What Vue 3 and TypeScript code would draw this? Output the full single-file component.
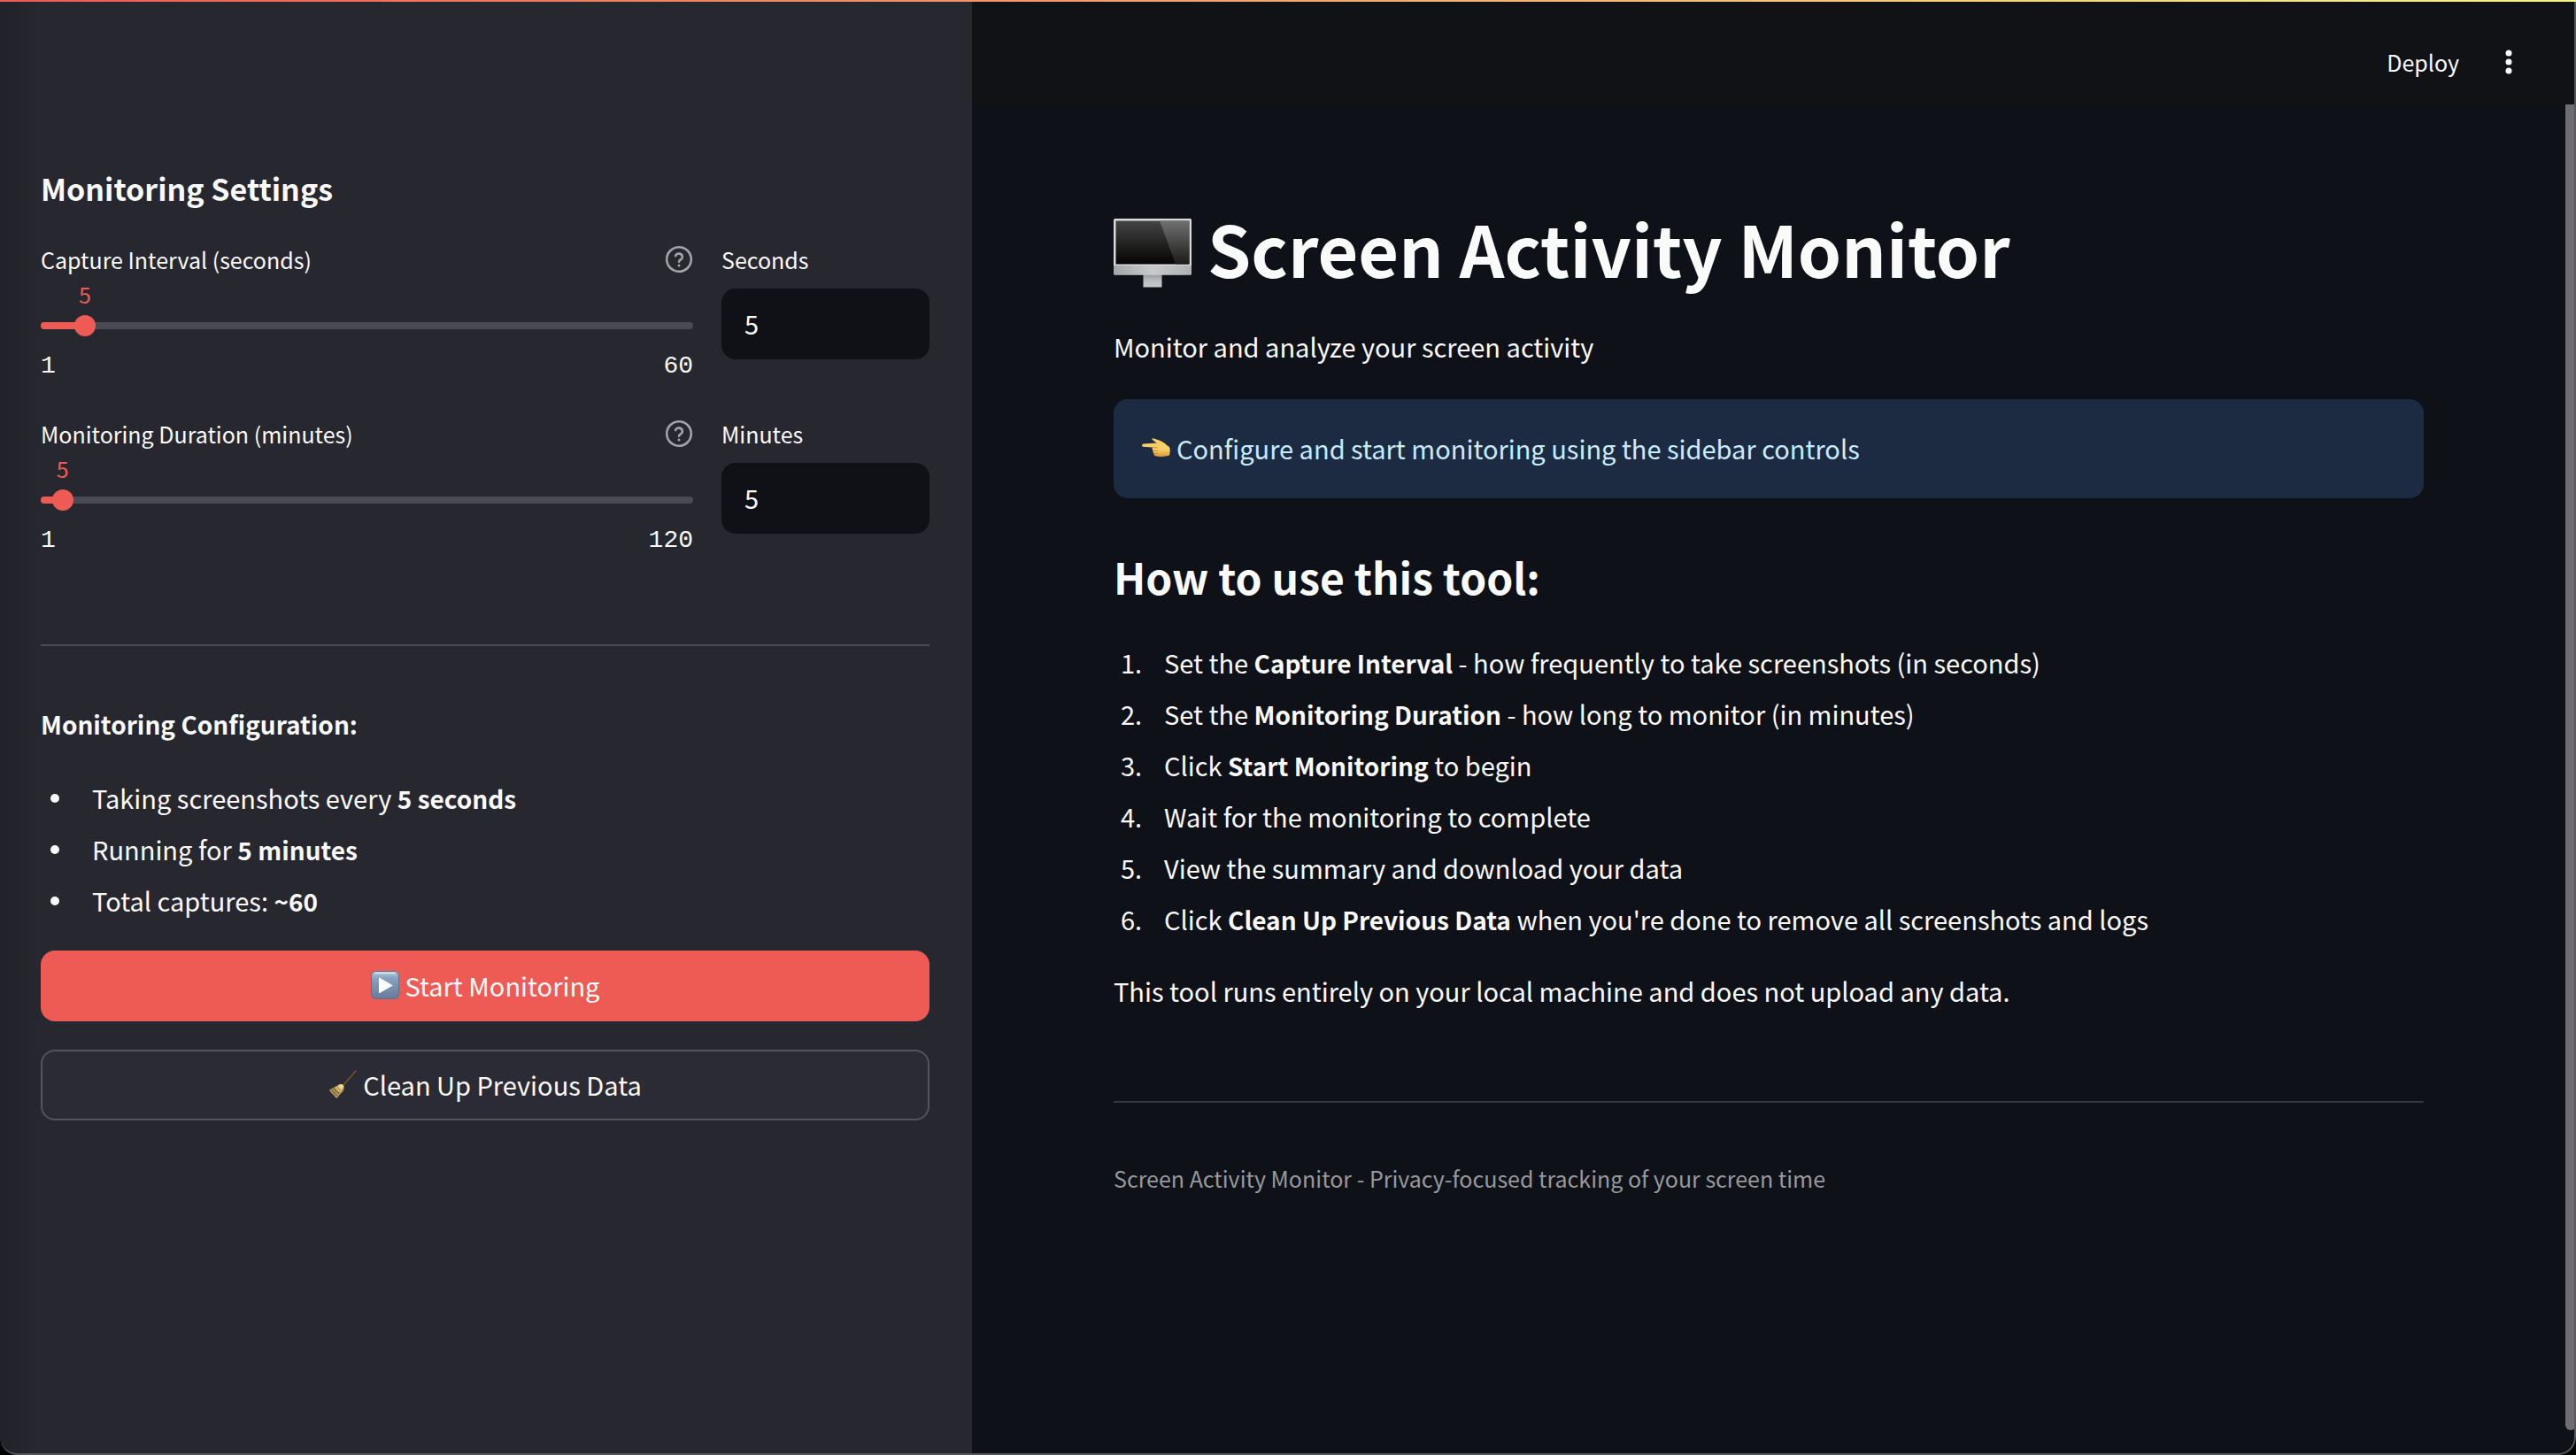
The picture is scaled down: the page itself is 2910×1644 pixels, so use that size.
<script setup lang="ts">
import { computed, reactive } from 'vue'

interface Setting {
  id: string
  label: string
  unit: string
  min: number
  max: number
  value: number
}

const settings = reactive<Setting[]>([
  { id: 'interval', label: 'Capture Interval (seconds)', unit: 'Seconds', min: 1, max: 60, value: 5 },
  { id: 'duration', label: 'Monitoring Duration (minutes)', unit: 'Minutes', min: 1, max: 120, value: 5 },
])

const percent = (s: Setting): string => `${((s.value - s.min) / (s.max - s.min)) * 100}%`
const captures = computed(() => Math.round((settings[1].value * 60) / settings[0].value))
</script>

<template>
  <div class="app">
    <aside class="sidebar">
      <h3>Monitoring Settings</h3>
      <div v-for="s in settings" :key="s.id" class="setting">
        <div class="slider">
          <div class="label-row">
            <label :for="`${s.id}-range`">{{ s.label }}</label>
            <button class="help" type="button" :aria-label="`Help: ${s.label}`">
              <svg viewBox="0 0 24 24" width="36" height="36" fill="none" stroke="currentColor" stroke-width="2" stroke-linecap="round" stroke-linejoin="round">
                <circle cx="12" cy="12" r="9.2" stroke-width="1.7" />
                <path d="M9.4 9.4a2.7 2.7 0 0 1 5.2.9c0 1.800-2.600 2.300-2.600 3.500" stroke-width="1.7" />
                <path d="M12 16.600v.1" />
              </svg>
            </button>
          </div>
          <div class="value-row">
            <div class="value-anchor" :style="{ width: percent(s) }"><output :for="`${s.id}-range`">{{ s.value }}</output></div>
          </div>
          <div class="track">
            <div class="fill" :style="{ width: percent(s) }"></div>
            <input :id="`${s.id}-range`" v-model.number="s.value" type="range" :min="s.min" :max="s.max" />
          </div>
          <div class="bounds"><span>{{ s.min }}</span><span>{{ s.max }}</span></div>
        </div>
        <div class="number">
          <label :for="`${s.id}-number`">{{ s.unit }}</label>
          <input :id="`${s.id}-number`" v-model.number="s.value" type="text" inputmode="numeric" />
        </div>
      </div>
      <hr />
      <p class="config"><strong>Monitoring Configuration:</strong></p>
      <ul>
        <li>Taking screenshots every <strong>{{ settings[0].value }} seconds</strong></li>
        <li>Running for <strong>{{ settings[1].value }} minutes</strong></li>
        <li>Total captures: <strong>~{{ captures }}</strong></li>
      </ul>
      <div class="actions">
        <button class="btn primary" type="button">
          <svg viewBox="0 0 32 32" width="32" height="32" aria-hidden="true">
            <defs>
              <linearGradient id="play" x1="0" y1="0" x2="0" y2="1">
                <stop offset="0" stop-color="#b9cbdc" />
                <stop offset=".25" stop-color="#86a3bf" />
                <stop offset="1" stop-color="#667c97" />
              </linearGradient>
            </defs>
            <rect x=".5" y=".5" width="31" height="31" rx="5" fill="url(#play)" stroke="#58728c" />
            <path d="M5 2.5h22" stroke="#dce6ef" stroke-width="1.5" stroke-linecap="round" />
            <path d="M9 8.2v16.2q0 1 1 .5l14-7.8q1-.6 0-1.2L10 7.700q-1-.5-1 .5z" fill="#fff" />
          </svg>
          Start Monitoring
        </button>
        <button class="btn secondary" type="button">
          <svg viewBox="0 0 32 32" width="32" height="32" aria-hidden="true">
            <path d="M16.500 17.500 31 1" stroke="#7c5526" stroke-width="1.4" stroke-linecap="round" />
            <path d="M12 16.500q4-1.600 5.500 2 .8 5.500-4 8.500L9.500 32q-2-1-3-3-3.500-2.500-5.500-6.500z" fill="#b59a5e" />
            <path d="M12 16.500q4-1.600 5.500 2-1 3-3 3.500-3-1-3.500-4.500z" fill="#f0d683" />
            <path d="M3.500 22q2 4 6.500 7M6 20.500q2 4 6 6" stroke="#7d6337" stroke-width="1.400" fill="none" />
            <path d="M8.500 18.700q2 4 5.500 5.500" stroke="#ddc58c" stroke-width="1.200" fill="none" />
          </svg>
          Clean Up Previous Data
        </button>
      </div>
    </aside>

    <div class="main">
      <header>
        <button class="deploy" type="button">Deploy</button>
        <button class="menu" type="button" aria-label="Main menu">
          <svg viewBox="0 0 32 32" width="32" height="32" fill="currentColor">
            <circle cx="16" cy="6" r="3.5" /><circle cx="16" cy="16" r="3.5" /><circle cx="16" cy="26" r="3.5" />
          </svg>
        </button>
      </header>
      <main>
        <h1>
          <svg viewBox="0 0 88 78" width="88" height="78" aria-hidden="true">
            <defs>
              <linearGradient id="scr" x1="0" y1="0" x2="0" y2="1">
                <stop offset="0" stop-color="#444" /><stop offset="1" stop-color="#050403" />
              </linearGradient>
              <linearGradient id="glare" x1="0" y1="0" x2="0" y2="1">
                <stop offset="0" stop-color="#707070" /><stop offset="1" stop-color="#1c1b1a" />
              </linearGradient>
              <linearGradient id="chin" x1="0" y1="0" x2="1" y2="0">
                <stop offset="0" stop-color="#a5a6a9" /><stop offset=".5" stop-color="#c8c9cc" /><stop offset="1" stop-color="#b0b1b4" />
              </linearGradient>
              <linearGradient id="stand" x1="0" y1="0" x2="0" y2="1">
                <stop offset="0" stop-color="#8d8e91" /><stop offset=".5" stop-color="#b9babd" /><stop offset="1" stop-color="#c9cacd" />
              </linearGradient>
            </defs>
            <rect x="33.500" y="61" width="21" height="16.500" fill="url(#stand)" />
            <rect x="0" y="0" width="88" height="63.500" rx="1.500" fill="#d9dadb" />
            <path d="M0 53h88v9q0 1.500-1.500 1.500h-85Q0 63.500 0 62z" fill="url(#chin)" />
            <rect x="2.500" y="2.500" width="83" height="49" fill="url(#scr)" />
            <path d="M52 2.500h33.500v49H70z" fill="url(#glare)" />
          </svg>
          Screen Activity Monitor
        </h1>
        <p class="lead">Monitor and analyze your screen activity</p>
        <div class="info" role="alert">
          <svg viewBox="0 0 32 24" width="32" height="24" aria-hidden="true">
            <defs>
              <linearGradient id="hand" x1="0" y1="0" x2="0" y2="1">
                <stop offset="0" stop-color="#f9cf62" /><stop offset=".6" stop-color="#f7d06b" /><stop offset="1" stop-color="#d99a31" />
              </linearGradient>
            </defs>
            <path d="M1.500 7.500Q0 8 0 9.200t1.500 1.500L12 11.500q-1 2 .5 3.500-.6 2 1 3.400 0 2.600 3 3.200 4 .8 8 .1 4-.2 6.500-1.200 1.500-5.500 0-9.500-3-1.500-5-4Q20 3 13.500 1.500q-2.500-.6-2 1 2.500 2.500 5.500 4z" fill="url(#hand)" />
            <path d="M12 11.500q3 .5 5.500-.2M12.500 15q3 .6 5.500-.2M13.500 18.400q2.500.5 4.500-.4" stroke="#c98a2b" stroke-width=".9" fill="none" />
          </svg>
          <span>Configure and start monitoring using the sidebar controls</span>
        </div>
        <h2>How to use this tool:</h2>
        <ol>
          <li>Set the <strong>Capture Interval</strong> - how frequently to take screenshots (in seconds)</li>
          <li>Set the <strong>Monitoring Duration</strong> - how long to monitor (in minutes)</li>
          <li>Click <strong>Start Monitoring</strong> to begin</li>
          <li>Wait for the monitoring to complete</li>
          <li>View the summary and download your data</li>
          <li>Click <strong>Clean Up Previous Data</strong> when you're done to remove all screenshots and logs</li>
        </ol>
        <p class="note">This tool runs entirely on your local machine and does not upload any data.</p>
        <hr />
        <footer>Screen Activity Monitor - Privacy-focused tracking of your screen time</footer>
      </main>
      <div class="scrollbar" aria-hidden="true"></div>
    </div>
    <div class="rainbow"></div>
    <div class="frame"></div>
  </div>
</template>

<style>
body {
  background: #000;
}
</style>

<style scoped>
* {
  box-sizing: border-box;
}
.app {
  position: relative;
  display: flex;
  min-height: 100vh;
  overflow: hidden;
  border-radius: 0 0 20px 20px;
  background: #0e1117;
  color: #fafafa;
  font: 400 29px/52px "Noto Sans CJK SC", "Noto Sans", sans-serif;
}
h1, h2, h3, p, ul, ol {
  margin: 0;
}
button, input {
  font: inherit;
  color: inherit;
}
button {
  display: flex;
  align-items: center;
  justify-content: center;
  padding: 0;
  border: 0;
  background: none;
}
strong {
  font-size: 28px;
  font-weight: 700;
}
svg {
  flex: none;
}
hr {
  width: 100%;
  height: 2px;
  margin: 0;
  border: 0;
  background: #4b4c53;
}
.sidebar {
  flex: none;
  width: 1098px;
  padding: 189px 48px 48px 46px;
  background: linear-gradient(90deg, #22222a, #27272f 48px);
}
h3 {
  margin-bottom: 30px;
  font-size: 34px;
  font-weight: 700;
  line-height: 48px;
}
.setting {
  display: flex;
  gap: 32px;
  height: 164px;
  margin-bottom: 33px;
}
.slider {
  flex: 1;
}
.number {
  width: 235px;
}
.label-row {
  display: flex;
  justify-content: space-between;
  align-items: center;
  height: 52px;
}
label {
  display: block;
  height: 52px;
  font-size: 25px;
  line-height: 52px;
}
.help {
  width: 32px;
  height: 36px;
  color: #a3a3a8;
}
.value-row {
  display: flex;
  height: 45px;
}
.value-anchor {
  display: flex;
  flex: none;
  justify-content: flex-end;
}
output {
  width: 40px;
  margin-right: -20px;
  color: #ed5b54;
  font-size: 25px;
  line-height: 26px;
  text-align: center;
}
.track {
  position: relative;
  height: 8px;
  border-radius: 4px;
  background: #4a4a54;
}
.fill {
  height: 8px;
  border-radius: 4px;
  background: #ed5b54;
}
.track input {
  position: absolute;
  top: -8px;
  left: -12px;
  width: calc(100% + 24px);
  height: 24px;
  margin: 0;
  appearance: none;
  background: none;
}
.track input::-webkit-slider-thumb {
  width: 24px;
  height: 24px;
  border-radius: 50%;
  appearance: none;
  background: #ed5b54;
}
.bounds {
  display: flex;
  justify-content: space-between;
  margin-top: 25px;
  font: 400 28px/34px "Liberation Mono", monospace;
}
.number input {
  display: block;
  width: 100%;
  height: 80px;
  margin-top: 7px;
  padding: 0 26px 2px;
  border: 0;
  border-radius: 16px;
  background: #101116;
}
.sidebar hr {
  margin: 100px 0 61px;
}
ul {
  margin-top: 28px;
  padding-left: 58px;
  line-height: 58px;
}
ul li {
  position: relative;
  height: 58px;
  list-style: none;
}
ul li::before {
  position: absolute;
  top: 25px;
  left: -47px;
  width: 10px;
  height: 10px;
  border-radius: 50%;
  background: #fafafa;
  content: "";
}
.actions {
  display: flex;
  flex-direction: column;
  gap: 32px;
  margin-top: 28px;
}
.btn {
  gap: 7px;
  width: 100%;
  height: 80px;
  padding-bottom: 2px;
  border-radius: 16px;
}
.primary {
  background: #ed5b54;
}
.secondary {
  border: 2px solid #53545e;
  background: #2b2b35;
}
.main {
  position: relative;
  flex: 1;
  min-width: 0;
}
header {
  display: flex;
  align-items: center;
  justify-content: flex-end;
  gap: 40px;
  height: 120px;
  padding: 22px 60px 2px 0;
  background: #111216;
}
.deploy {
  font-size: 25px;
}
main {
  padding: 116px 172px 0 160px;
}
h1 {
  display: flex;
  align-items: flex-start;
  gap: 18px;
  margin-bottom: 40px;
  font-size: 79px;
  font-weight: 700;
  line-height: 88px;
}
h1 svg {
  margin-top: 11px;
}
.info {
  display: flex;
  align-items: center;
  gap: 7px;
  height: 112px;
  margin-top: 34px;
  padding: 0 32px 3px;
  border-radius: 16px;
  background: #1c2b41;
  color: #c9ebff;
}
h2 {
  margin: 55px 0 35px;
  font-size: 48px;
  font-weight: 700;
  line-height: 66px;
}
ol {
  padding-left: 8px;
  line-height: 58px;
  list-style: none;
  counter-reset: step;
}
ol li {
  height: 58px;
  counter-increment: step;
}
ol li::before {
  display: inline-block;
  width: 49px;
  content: counter(step) ".";
}
.note {
  margin-top: 26px;
}
main hr {
  margin: 99px 0 61px;
  background: #36383e;
}
footer {
  color: #98999d;
  font-size: 25px;
  line-height: 48px;
}
.scrollbar {
  position: absolute;
  top: 118px;
  right: 0;
  bottom: 28px;
  width: 12px;
  border-radius: 0 0 6px 6px;
  background: #6e6e72;
}
.rainbow {
  position: absolute;
  top: 0;
  left: 0;
  width: 100%;
  height: 2px;
  background: linear-gradient(90deg, #ed5b54, #f9f38b);
}
.frame {
  position: absolute;
  inset: 2px 0 0;
  border: solid #55555b;
  border-width: 0 2px 2px 0;
  border-radius: 0 0 20px 20px;
  pointer-events: none;
}
</style>
